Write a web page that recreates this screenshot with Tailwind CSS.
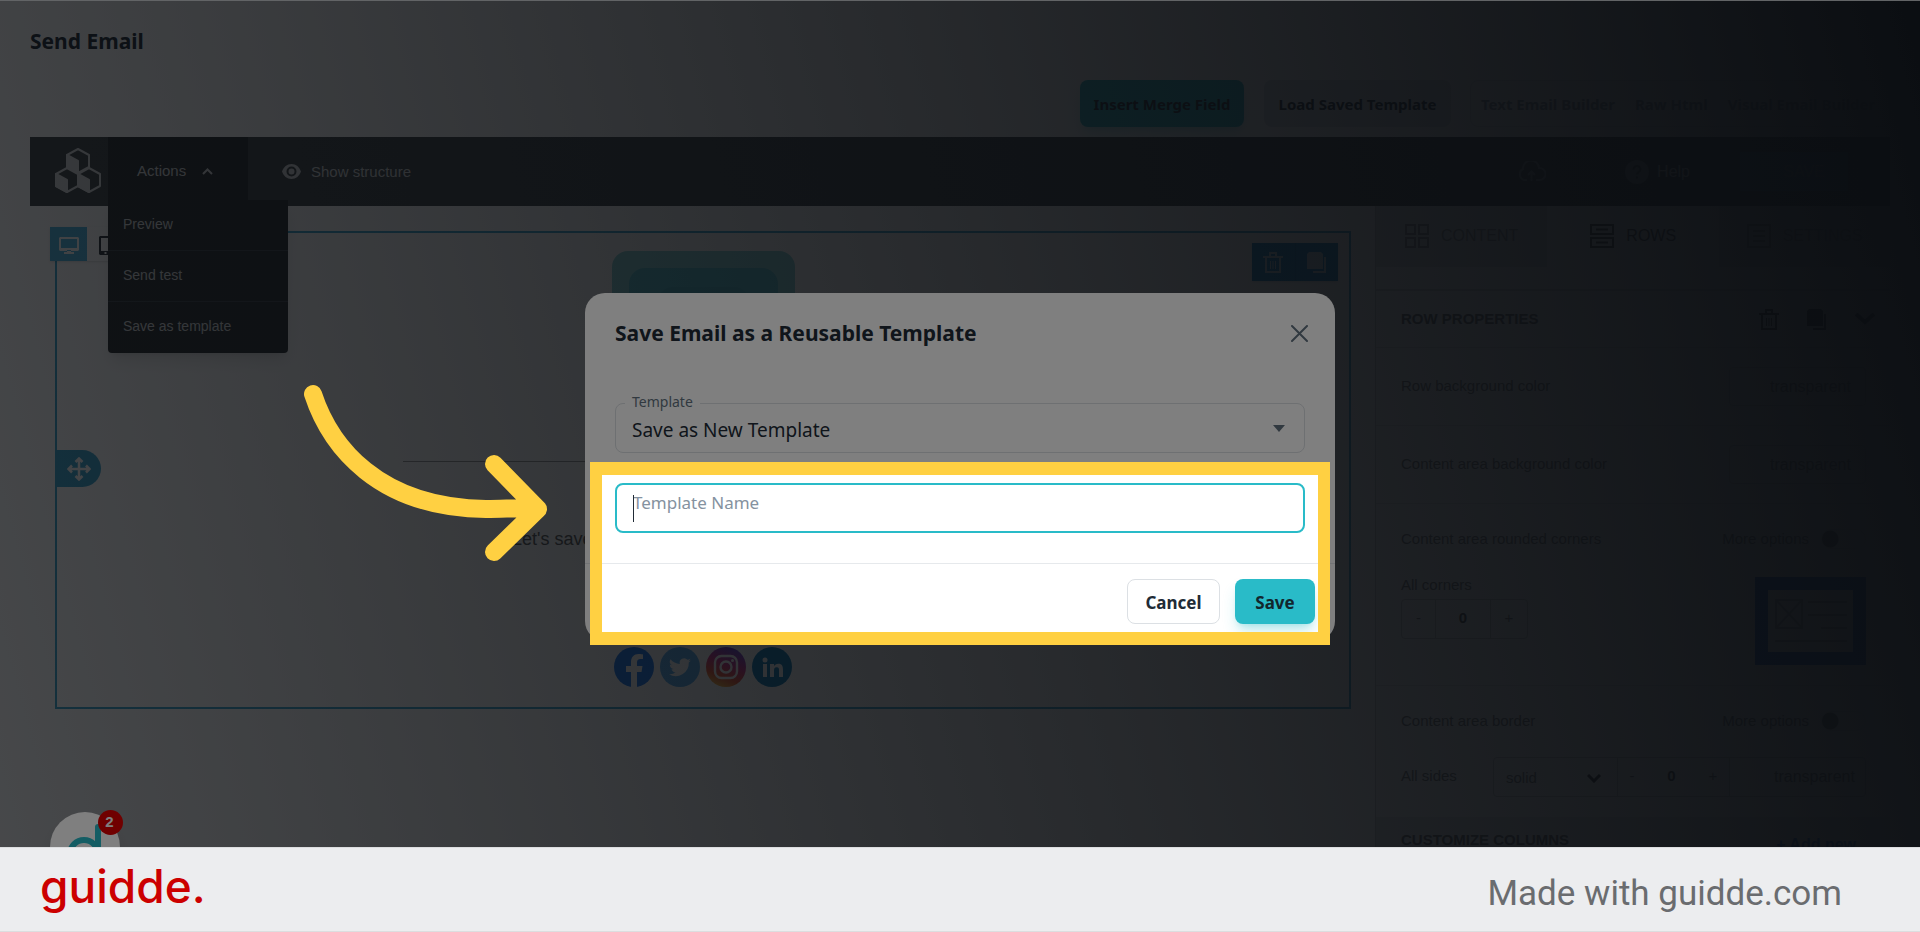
<!DOCTYPE html>
<html lang="en">
<head>
  <meta charset="UTF-8" />
  <meta name="viewport" content="width=device-width, initial-scale=1.0" />
  <title>Send Email</title>
  <script src="https://cdn.jsdelivr.net/npm/@tailwindcss/browser@4"></script>
</head>
<body class="h-screen flex flex-col overflow-hidden bg-white text-[#212b36] font-['Noto_Sans','Open_Sans',sans-serif]">

  <div class="relative flex-1 min-h-0 overflow-hidden border-t border-[#626466]">

    <!-- Page -->
    <main class="h-screen flex flex-col px-[30px]">
      <h1 class="pt-[23px] text-[21px] leading-[34px] font-bold">Send Email</h1>

      <div class="mt-[22px] flex justify-end items-center gap-5">
        <button type="button" class="h-[47px] w-[164px] pt-0.5 rounded-lg bg-[#29bbc8] text-[15px] font-bold whitespace-nowrap shadow-lg shadow-[#29bbc8]/25">Insert Merge Field</button>
        <button type="button" class="h-[47px] w-[187px] pt-0.5 rounded-lg bg-[#dfe3e8] text-[15px] font-bold whitespace-nowrap">Load Saved Template</button>
        <div class="h-[47px] w-[420px] flex items-center gap-5 pl-[10px] pt-0.5 -ml-px rounded-lg border border-gray-200 text-[15px] font-bold whitespace-nowrap text-[#8592a0]">
          <button type="button">Text Email Builder</button>
          <button type="button">Raw Html</button>
          <button type="button">Visual Email Builder</button>
        </div>
      </div>

      <!-- Editor -->
      <div class="mt-[10px] flex-1 flex flex-col font-['Liberation_Sans',Arial,sans-serif]">
        <header class="relative z-20 h-[69px] shrink-0 flex items-center bg-[#3e4447] text-[#d4d6d8] text-[15px]">
          <svg class="ml-[25px] mb-1 w-[46px] h-[46px]" viewBox="0 0 46 46" fill="none" stroke="currentColor" stroke-width="2" stroke-linejoin="round">
            <path d="M23 2l11 6v12l-11 6-11-6V8z" />
            <path d="M12 21l11 6v12l-11 6-11-6V27z" />
            <path d="M34 21l11 6v12l-11 6-11-6V27z" />
            <path d="M12 8l11 6v12l-11-6z" fill="currentColor" />
            <path d="M1 27l11 6v12L1 39z" fill="currentColor" />
            <path d="M23 27l11 6v12l-11-6z" fill="currentColor" />
          </svg>
          <div class="relative ml-[7px] h-full w-[140px] bg-[#272c2e]">
            <button type="button" class="h-full w-full flex items-center pl-[29px] gap-4">
              Actions
              <svg class="w-[11px] h-[7px]" viewBox="0 0 11 7" fill="none" stroke="currentColor" stroke-width="2"><path d="M1 6l4.500-4.500L10 6" /></svg>
            </button>
            <div class="absolute top-[63px] left-0 w-[180px] rounded-b bg-[#272c2e] text-[14px] shadow-lg divide-y divide-[#3d444b]">
              <button type="button" class="block w-full h-[51px] pl-[15px] pb-0.5 text-left">Preview</button>
              <button type="button" class="block w-full h-[51px] pl-[15px] pb-0.5 text-left">Send test</button>
              <button type="button" class="block w-full h-[51px] pl-[15px] pb-0.5 text-left">Save as template</button>
            </div>
          </div>
          <button type="button" class="ml-[34px] flex items-center gap-[10px]">
            <svg class="w-[19px] h-[15px]" viewBox="0 0 19 15"><path fill="currentColor" fill-rule="evenodd" d="M9.500 0C5 0 1.500 3 0 7.500 1.500 12 5 15 9.500 15S17.500 12 19 7.500C17.500 3 14 0 9.500 0zm0 12.500a5 5 0 110-10 5 5 0 010 10zm0-2a3 3 0 100-6 3 3 0 000 6z" /></svg>
            <span class="pt-0.5">Show structure</span>
          </button>

          <div class="ml-auto flex items-center text-[16px]">
            <svg class="w-[29px] h-[21px] text-[#7d868c]" viewBox="0 0 29 21" fill="none" stroke="currentColor" stroke-width="2"><path d="M10 19H7a6 6 0 01-1-11 8 8 0 0116-1 6 6 0 011 12h-4M14.500 20v-9M11 14l3.500-3.500L18 14" /></svg>
            <span class="ml-[32px] h-[45px] w-px bg-[#394147]"></span>
            <button type="button" class="ml-[46px] flex items-center gap-2">
              <svg class="w-6 h-6" viewBox="0 0 24 24"><circle cx="12" cy="12" r="12" fill="#7d868c" /><path d="M8.500 9.500a3.500 3.500 0 117 0c0 2.500-3.500 2.500-3.500 5M12 16.500v2" fill="none" stroke="#3e4447" stroke-width="2" /></svg>
              Help
            </button>
            <button type="button" class="ml-[50px] mr-[42px] h-[39px] w-[108px] pl-5 bg-[#3b6d8c] text-[#7d868c]">SAVE</button>
          </div>
        </header>

        <div class="flex-1 flex">
          <!-- Canvas -->
          <section class="relative flex-1 px-6 pt-[25px]">
            <div class="relative h-[478px] ml-px border-2 border-[#3aa6d0] pt-[18px] flex flex-col items-center">
              <div class="w-[183px] h-[190px] rounded-2xl bg-[#86d5d8] p-[17px]">
                <div class="h-full rounded-2xl bg-[#53bfcd] pt-[19px] px-7"><div class="h-20 rounded-2xl bg-[#4ab5c4]"></div></div>
              </div>
              <hr class="mt-5 w-[600px] border-[#9a9a9a]" />
              <p class="mt-[65px] w-[600px] pl-[109px] text-[18px] leading-6 text-[#555]">Let's save</p>
              <div class="mt-24 flex gap-[6px]">
                <svg class="w-10 h-10" viewBox="0 0 40 40"><circle cx="20" cy="20" r="20" fill="#1877f2" /><path fill="#fff" d="M17 40V25h-5v-6h5v-4c0-5 3-8 7.500-8 2 0 4.500.400 4.500.400V12h-2.500c-2.500 0-3.500 1.500-3.500 3.500V19h5.500l-1 6H23v15z" /></svg>
                <svg class="w-10 h-10" viewBox="0 0 40 40"><circle cx="20" cy="20" r="20" fill="#55acee" /><path fill="#fff" d="M31 13.500a9 9 0 01-2.600.700 4.500 4.500 0 002-2.500 9 9 0 01-2.900 1.100 4.500 4.500 0 00-7.700 4.100 13 13 0 01-9.300-4.700 4.500 4.500 0 001.400 6 4.500 4.500 0 01-2-.600 4.500 4.500 0 003.600 4.500 4.500 4.500 0 01-2 .100 4.500 4.500 0 004.200 3.100A9 9 0 019 27.200a13 13 0 0019.800-11.600z" /></svg>
                <svg class="w-10 h-10" viewBox="0 0 40 40">
                  <defs><linearGradient id="ig" x1="0.200" y1="1" x2="0.600" y2="0"><stop offset="0" stop-color="#fdc53a" /><stop offset="0.300" stop-color="#f0532f" /><stop offset="0.600" stop-color="#d02d83" /><stop offset="1" stop-color="#6b3fd0" /></linearGradient></defs>
                  <circle cx="20" cy="20" r="20" fill="url(#ig)" /><g fill="none" stroke="#fff" stroke-width="2.400"><rect x="9" y="9" width="22" height="22" rx="6.500" /><circle cx="20" cy="20" r="5.500" /></g><circle cx="26.500" cy="13.500" r="1.500" fill="#fff" />
                </svg>
                <svg class="w-10 h-10" viewBox="0 0 40 40"><circle cx="20" cy="20" r="20" fill="#0a7bb8" /><g fill="#fff"><circle cx="13" cy="13" r="2.500" /><rect x="11" y="17" width="4" height="13" /><path d="M18 17h4v2c.800-1.300 2.200-2.300 4.300-2.300 4 0 4.700 2.700 4.700 6V30h-4v-6.500c0-1.600 0-3.300-2.300-3.300S22 22 22 23.500V30h-4z" /></g></svg>
              </div>

              <!-- Row handle -->
              <button type="button" aria-label="Move row" class="absolute left-0 top-[217px] w-11 h-[37px] rounded-r-full bg-[#3aa6d0] flex items-center justify-center text-white">
                <svg class="w-6 h-6" viewBox="0 0 24 24" fill="none" stroke="currentColor" stroke-width="2.500"><path d="M12 2v20M2 12h20M8.500 5L12 1.500 15.500 5M8.500 19l3.500 3.500 3.500-3.500M5 8.500L1.500 12 5 15.500M19 8.500l3.500 3.500-3.500 3.500" /></svg>
              </button>
              <div class="absolute right-[11px] top-[10px] h-[38px] w-[86px] flex bg-[#1583c4] shadow text-[#b5cddb]">
                <button type="button" aria-label="Delete row" class="flex-1 flex items-center justify-center border-r border-[#1277b2]">
                  <svg class="w-5 h-[21px]" viewBox="0 0 20 21" fill="none" stroke="currentColor" stroke-width="2"><path d="M0 5h20M7 5V1h6v4M3 5v15h14V5" /><path stroke-width="1" d="M7.500 9v8M10 9v8M12.500 9v8" /></svg>
                </button>
                <button type="button" aria-label="Duplicate row" class="flex-1 flex items-center justify-center">
                  <svg class="w-5 h-[21px]" viewBox="0 0 20 21"><path fill="currentColor" d="M0 2l2-2h12l2 2v15H0z" /><path d="M18 5v15H6" fill="none" stroke="currentColor" stroke-width="2" /></svg>
                </button>
              </div>
            </div>

            <!-- Device switch -->
            <div class="absolute left-5 top-[21px] h-[34px] flex bg-white shadow">
              <button type="button" aria-label="Desktop view" class="w-[37px] pt-0.5 pl-px flex items-center justify-center bg-[#4ab4e0] text-white">
                <svg class="w-5 h-[17px]" viewBox="0 0 20 17"><path fill="currentColor" fill-rule="evenodd" d="M1 0h18l1 1v12l-1 1H1l-1-1V1zm1 2v9h16V2zM8 13h4v2h3v2H5v-2h3z" /></svg>
              </button>
              <button type="button" aria-label="Mobile view" class="w-[37px] pt-0.5 flex items-center justify-center text-[#2b3138]">
                <svg class="w-[13px] h-[19px]" viewBox="0 0 13 19"><path fill="currentColor" fill-rule="evenodd" d="M1 0h11l1 1v17l-1 1H1l-1-1V1zm1 2v13h9V2zm3.500 14v2h2v-2z" /></svg>
              </button>
            </div>
          </section>

          <!-- Properties panel -->
          <aside class="w-[515px] shrink-0 border-l border-[#c8c8c8] bg-[#f4f4f4] text-[15px] text-[#777]">
            <nav class="h-[61px] grid grid-cols-3 text-[16px]">
              <button type="button" class="flex items-center gap-3 pl-[29px] pb-0.5 bg-[#d8dadc] text-[#8a8a8a]">
                <svg class="w-6 h-6" viewBox="0 0 24 24" fill="none" stroke="currentColor" stroke-width="2"><path d="M1 1h9v9H1zM14 1h9v9h-9zM1 14h9v9H1zM14 14h9v9h-9z" /></svg>
                CONTENT
              </button>
              <button type="button" class="flex items-center gap-3 pl-[43px] pb-0.5 text-[#444]">
                <svg class="w-6 h-6" viewBox="0 0 24 24" fill="none" stroke="currentColor" stroke-width="2"><path d="M1 1h22v9H1zM1 14h22v9H1zM6 5.500h12M6 18.500h12" /></svg>
                ROWS
              </button>
              <button type="button" class="flex items-center gap-3 pl-7 pb-0.5 bg-[#d8dadc] text-[#8a8a8a]">
                <svg class="w-6 h-6" viewBox="0 0 24 24" fill="none" stroke="currentColor" stroke-width="2"><path d="M1 1h22v22H1zM6 7h12M6 12h12M6 17h12" /></svg>
                SETTINGS
              </button>
            </nav>
            <div class="h-6 border-b-2 border-[#cfcfcf]"></div>

            <div class="h-[57px] pl-[25px] pr-[15px] flex items-center border-b border-[#d8d8d8]">
              <h2 class="font-bold text-[#666]">ROW PROPERTIES</h2>
              <div class="ml-auto flex items-center gap-7 text-[#333]">
                <button type="button" aria-label="Delete"><svg class="block w-5 h-[21px]" viewBox="0 0 20 21" fill="none" stroke="currentColor" stroke-width="2"><path d="M0 5h20M7 5V1h6v4M3 5v15h14V5" /><path stroke-width="1" d="M7.500 9v8M10 9v8M12.500 9v8" /></svg></button>
                <button type="button" aria-label="Duplicate"><svg class="block w-5 h-[21px]" viewBox="0 0 20 21"><path fill="currentColor" d="M0 2l2-2h12l2 2v15H0z" /><path d="M18 5v15H6" fill="none" stroke="currentColor" stroke-width="2" /></svg></button>
                <button type="button" aria-label="Collapse"><svg class="block w-5 h-3" viewBox="0 0 20 12" fill="none" stroke="currentColor" stroke-width="4"><path d="M1 1l9 8 9-8" /></svg></button>
              </div>
            </div>

            <div class="h-[78px] pl-[25px] pr-6 flex items-center justify-between border-b border-[#dcdcdc]">
              <label for="row-bg">Row background color</label>
              <input id="row-bg" type="text" value="transparent" class="w-[137px] h-[39px] pl-10 rounded border border-[#ccc] text-[16px] text-[#777]" />
            </div>
            <div class="h-[78px] pl-[25px] pr-6 flex items-center justify-between border-b border-[#dcdcdc]">
              <label for="area-bg">Content area background color</label>
              <input id="area-bg" type="text" value="transparent" class="w-[137px] h-[39px] pl-10 rounded border border-[#ccc] text-[16px] text-[#777]" />
            </div>

            <div class="h-[182px] pl-[25px] pr-6 pt-6 border-b border-[#dcdcdc]">
              <div class="flex justify-between items-center">
                <h3>Content area rounded corners</h3>
                <label class="flex items-center gap-3">More options
                  <input type="checkbox" class="appearance-none w-[45px] h-5 rounded-full border border-[#ddd] bg-[radial-gradient(circle_at_8px_50%,#777_8px,transparent_9px)]" />
                </label>
              </div>
              <div class="mt-[22px] flex justify-between">
                <div>
                  <label for="corners" class="block leading-6">All corners</label>
                  <div class="mt-0.5 h-10 w-[127px] flex rounded border border-[#c4c4c4] divide-x divide-[#c4c4c4]">
                    <button type="button" class="w-[34px]">-</button>
                    <input id="corners" type="text" value="0" class="w-[55px] text-center font-bold text-[#444]" />
                    <button type="button" class="flex-1">+</button>
                  </div>
                </div>
                <div class="mt-1 w-[111px] h-[88px] border-[13px] border-[#1b5fd0] flex items-center justify-center">
                  <svg class="w-[72px] h-11" viewBox="0 0 72 44" fill="none" stroke="#b0b0b0" stroke-width="2"><path d="M1 1h26v28H1zM1 1l26 28M27 1L1 29M33 3h39M33 16h39M46 29h26M0 42h72" /></svg>
                </div>
              </div>
            </div>

            <div class="h-[131px] pl-[25px] pr-6 pt-6">
              <div class="flex justify-between items-center">
                <h3>Content area border</h3>
                <label class="flex items-center gap-3">More options
                  <input type="checkbox" class="appearance-none w-[45px] h-5 rounded-full border border-[#ddd] bg-[radial-gradient(circle_at_8px_50%,#777_8px,transparent_9px)]" />
                </label>
              </div>
              <div class="mt-6 flex items-center justify-between">
                <label for="sides">All sides</label>
                <div class="w-[373px] h-10 flex rounded border border-[#c4c4c4] divide-x divide-[#c4c4c4]">
                  <div class="relative w-[124px]">
                    <select id="sides" class="appearance-none w-full h-full pl-3 pt-1"><option>solid</option></select>
                    <svg class="absolute right-4 top-4 w-[14px] h-[9px] pointer-events-none" viewBox="0 0 14 9" fill="none" stroke="#333" stroke-width="3"><path d="M1 1l6 6 6-6" /></svg>
                  </div>
                  <div class="w-[112px] flex">
                    <button type="button" class="w-7">-</button>
                    <input type="text" value="0" aria-label="Border width" class="flex-1 min-w-0 text-center font-bold text-[#444]" />
                    <button type="button" class="w-8">+</button>
                  </div>
                  <input type="text" value="transparent" aria-label="Border color" class="flex-1 min-w-0 pl-11 text-[16px] text-[#777]" />
                </div>
              </div>
            </div>

            <div class="h-[60px] pl-[25px] pr-[34px] pt-2 flex justify-between bg-[#dfe1e3] text-[15px] font-bold">
              <h2 class="pt-1 text-[#666]">CUSTOMIZE COLUMNS</h2>
              <button type="button" class="self-start pt-2 text-[16px] text-[#2a6fd0]">+ Add new</button>
            </div>
          </aside>
        </div>
      </div>
    </main>

    <!-- Backdrop -->
    <div class="absolute inset-x-0 top-0 z-30 h-screen bg-[linear-gradient(75deg,rgba(22,28,36,0.48)_0%,rgb(22,28,36)_100%)]"></div>

    <!-- Chat bubble -->
    <div class="absolute left-[50px] -bottom-[35px] z-40 w-[70px] h-[70px] rounded-full bg-white shadow-lg">
      <svg class="w-[70px] h-[70px]" viewBox="0 0 70 70" fill="none" stroke="#29bbc8" stroke-width="6"><circle cx="34" cy="42" r="14" /><path d="M48 15v40" stroke-linecap="round" /></svg>
      <span class="absolute -top-[2px] -right-[3px] w-[25px] h-[25px] rounded-full bg-[#e00000] flex items-center justify-center pr-0.5 text-[15px] font-bold text-white font-['Liberation_Sans',Arial,sans-serif]">2</span>
    </div>

    <!-- Modal -->
    <div class="absolute inset-x-0 top-0 z-50 h-screen flex items-center justify-center">
      <form class="relative w-[750px] rounded-[20px] bg-white">
        <div class="flex items-center justify-between pt-6 pl-[30px] pr-[27px]">
          <h2 class="text-[21px] leading-8 font-bold">Save Email as a Reusable Template</h2>
          <button type="button" aria-label="Close" class="text-[#637381]">
            <svg class="block w-[17px] h-[17px]" viewBox="0 0 17 17" fill="none" stroke="currentColor" stroke-width="2" stroke-linecap="round"><path d="M1 1l15 15M16 1L1 16" /></svg>
          </button>
        </div>

        <div class="px-[30px] pt-[54px]">
          <div class="relative">
            <label for="template" class="absolute -top-[11px] left-[10px] px-[7px] bg-white text-[14px] leading-5 text-[#637381]">Template</label>
            <select id="template" class="appearance-none block w-full h-[50px] pl-4 pt-1 pb-0 rounded-lg border border-[#dce0e4] text-[19px]"><option>Save as New Template</option></select>
            <svg class="absolute right-5 top-[22px] w-3 h-[7px] pointer-events-none" viewBox="0 0 12 7"><path d="M0 0h12L6 7z" fill="#637381" /></svg>
          </div>
          <div class="relative mt-[30px]">
            <input type="text" aria-label="Template Name" placeholder="Template Name" class="block w-full h-[50px] pl-4 pb-3 rounded-lg border-2 border-[#29bbc8] text-[17px] outline-none placeholder:text-[#8592a0]" />
            <span class="absolute left-[18px] top-3 w-px h-[27px] bg-[#212b36]"></span>
          </div>
        </div>

        <div class="mt-[30px] pt-[15px] pb-[17px] pr-5 flex justify-end gap-[15px] border-t border-[#e6e9ec] text-[17px] font-bold">
          <button type="button" class="w-[93px] h-[45px] pt-0.5 rounded-lg border border-[#dce0e4]">Cancel</button>
          <button type="submit" class="w-20 h-[45px] pt-0.5 rounded-lg bg-[#29bbc8] shadow-lg shadow-[#29bbc8]/30 text-[#12272e]">Save</button>
        </div>

        <!-- Spotlight -->
        <div class="absolute inset-x-[5px] top-[169px] h-[183px] border-x-[12px] border-y-[13px] border-[#ffd042] shadow-[0_0_0_2000px_rgba(0,0,0,0.5)] pointer-events-none"></div>
        <svg class="absolute -left-[290px] top-[83px] w-[260px] h-[190px]" viewBox="0 0 260 190" fill="none" stroke="#ffd042" stroke-width="18" stroke-linecap="round" stroke-linejoin="round"><path d="M18 18C35 70 83 132 191 133C212 133 228 131 243 133M199 88l44 45-44 43" /></svg>
      </form>
    </div>
  </div>

  <!-- Footer -->
  <footer class="relative z-50 h-[85px] shrink-0 flex items-center justify-between pl-10 pr-[78px] bg-[#ecedef] border-y border-[#dcdddf]">
    <a href="#" class="pb-2 text-[46px] leading-[56px] font-medium text-[#cc0000] font-['Inter',sans-serif]">guidde.</a>
    <p class="pt-2 text-[35px] leading-[42px] text-[#6a6c6f] font-['Roboto',sans-serif]">Made with guidde.com</p>
  </footer>

</body>
</html>
